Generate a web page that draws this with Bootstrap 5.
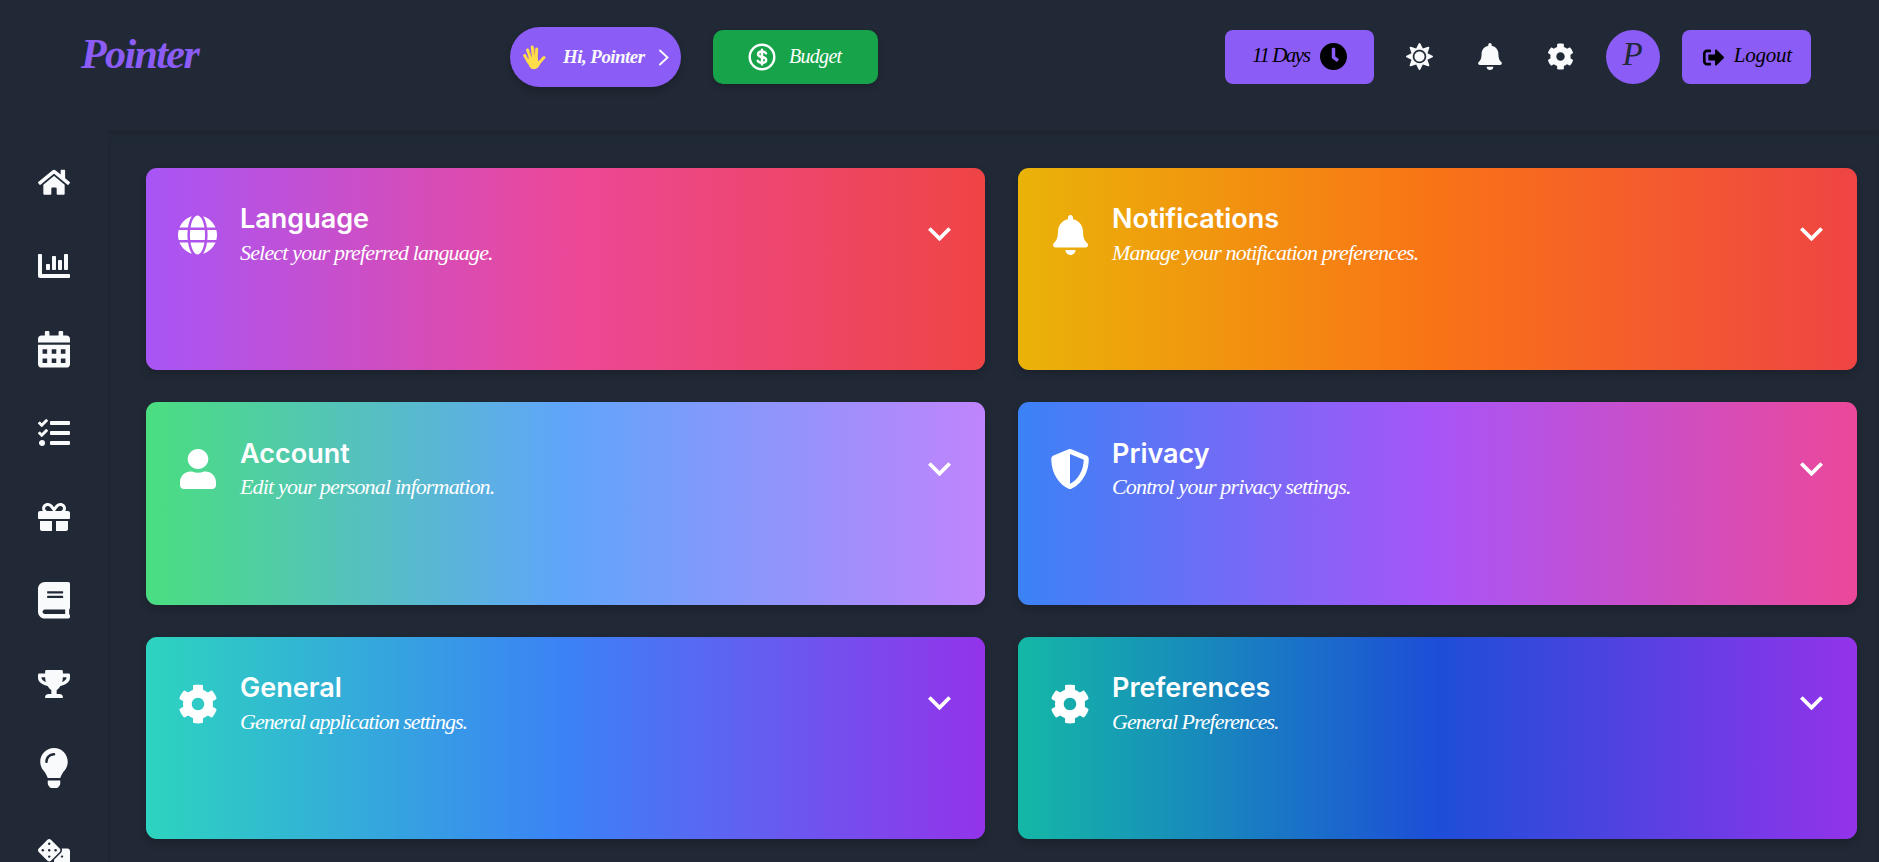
<!DOCTYPE html>
<html lang="en">
<head>
<meta charset="utf-8">
<meta name="viewport" content="width=device-width, initial-scale=1">
<title>Pointer - Settings</title>
<link href="https://cdn.jsdelivr.net/npm/bootstrap@5.3.0/dist/css/bootstrap.min.css" rel="stylesheet">
<style>
:root{--violet:#8b5cf6;--ink:#212936;--paper:#f9fafb}
body{background:var(--ink);font-family:Satisfy,"Liberation Serif",serif;font-style:italic;height:100vh;overflow:hidden;color:#fff}
svg{display:block;flex:none;fill:currentColor}
.topbar{height:130px;padding:0 68px 16px 81px}
.brand{color:var(--violet);font-size:42px;font-weight:700;line-height:1;width:429px;letter-spacing:-1.6px;padding-bottom:6px}
.hello{width:171px;height:60px;background:var(--violet);color:var(--paper);font-size:19px;font-weight:700;padding:0 11px 0 12px;box-shadow:0 4px 8px #0003}
.budget{width:165px;height:54px;margin-left:32px;background:#16a34a;border-radius:10px;font-size:20px;padding-left:35px;box-shadow:0 3px 6px #0003}
.solid{height:54px;background:var(--violet);color:#000;border-radius:8px;font-size:21px}
.days{width:149px;padding:0 27px}
.tools{color:var(--paper)}
.tools > svg,.days svg{margin-bottom:1px}
.tool-gap{margin-left:45px}
.edge-gap{margin-left:32px}
.avatar{width:54px;height:54px;background:var(--violet);color:var(--ink);font-size:33px;font-weight:500;padding:0 1px 5px 0}
.logout{width:129px;margin-left:22px;padding:0 19px 0 21px}
.txt{white-space:nowrap;line-height:1}
.t-hello{letter-spacing:-.55px;padding-left:1px;padding-bottom:2px}
.t-budget{letter-spacing:-.7px;margin-left:13px;padding-bottom:2px}
.t-days{letter-spacing:-1.5px;padding-bottom:3px}
.t-logout{letter-spacing:-.2px;padding-bottom:3px}
.rail{width:108px;color:var(--paper);padding-top:10.5px}
.rail a{height:83.65px;color:inherit}
.main-area{box-shadow:inset 0 11px 7px -6px #1d262f,inset 1px 0 2px -1px #1f2833;padding:37.9px 22px 0 38px}
.tiles{display:grid;grid-template-columns:1fr 1fr;gap:32px 33px;grid-auto-rows:202.5px}
.tile{border-radius:11px;padding:33.500px 34px 32px 32px;box-shadow:0 4px 8px #0003}
.tile-icon{width:40px;margin-right:22px}
.tile h2{font:600 27px/35.500px Inter,sans-serif;margin:0}
.tile p{font-size:22px;line-height:31px;margin:0;white-space:nowrap;letter-spacing:-.82px}
.g5 p,.g6 p{letter-spacing:-1px}
.g1{background:linear-gradient(90deg,#a855f7,#ec4899,#ef4444)}
.g2{background:linear-gradient(90deg,#eab308,#f97316,#ef4444)}
.g3{background:linear-gradient(90deg,#4ade80,#60a5fa,#c084fc)}
.g4{background:linear-gradient(90deg,#3b82f6,#a855f7,#ec4899)}
.g5{background:linear-gradient(90deg,#2dd4bf,#3b82f6,#9333ea)}
.g6{background:linear-gradient(90deg,#14b8a6,#1d4ed8,#9333ea)}
</style>
</head>
<body class="d-flex flex-column">
<svg width="0" height="0" class="position-absolute">
<symbol id="bell" viewBox="0 0 448 512"><path d="M224 512c35.32 0 63.97-28.65 63.97-64H160.03c0 35.35 28.65 64 63.97 64zm215.39-149.71c-19.32-20.76-55.47-51.99-55.47-154.29 0-77.7-54.48-139.9-127.94-155.16V32c0-17.67-14.32-32-31.98-32s-31.98 14.33-31.98 32v20.84C118.56 68.1 64.08 130.3 64.08 208c0 102.3-36.15 133.53-55.47 154.29-6 6.45-8.66 14.16-8.61 21.71.11 16.4 12.98 32 32.1 32h383.8c19.12 0 32-15.6 32.1-32 .05-7.55-2.61-15.27-8.61-21.71z"/></symbol>
<symbol id="cog" viewBox="0 0 512 512"><path d="M487.4 315.7l-42.6-24.6c4.3-23.2 4.3-47 0-70.2l42.6-24.6c4.9-2.8 7.1-8.6 5.5-14-11.1-35.6-30-67.8-54.7-94.6-3.8-4.1-10-5.1-14.8-2.3L380.8 110c-17.9-15.4-38.5-27.3-60.8-35.1V25.8c0-5.6-3.9-10.5-9.4-11.7-36.7-8.2-74.3-7.8-109.2 0-5.5 1.2-9.4 6.1-9.4 11.7V75c-22.2 7.9-42.8 19.8-60.8 35.1L88.7 85.5c-4.9-2.8-11-1.9-14.8 2.3-24.7 26.7-43.6 58.9-54.7 94.6-1.7 5.4.6 11.2 5.5 14L67.3 221c-4.3 23.2-4.3 47 0 70.2l-42.6 24.6c-4.9 2.8-7.1 8.6-5.5 14 11.1 35.6 30 67.8 54.7 94.6 3.8 4.1 10 5.1 14.8 2.3l42.6-24.6c17.9 15.4 38.5 27.3 60.8 35.1v49.2c0 5.6 3.9 10.5 9.4 11.7 36.7 8.2 74.3 7.8 109.2 0 5.5-1.2 9.4-6.1 9.4-11.7v-49.2c22.2-7.9 42.8-19.8 60.8-35.1l42.6 24.6c4.9 2.8 11 1.9 14.8-2.3 24.7-26.7 43.6-58.9 54.7-94.6 1.5-5.5-.7-11.3-5.6-14.1zM256 336c-44.1 0-80-35.9-80-80s35.9-80 80-80 80 35.9 80 80-35.9 80-80 80z"/></symbol>
<symbol id="down" viewBox="6 8.59 12 7.41"><path d="M16.59 8.59L12 13.17 7.41 8.59 6 10l6 6 6-6z"/></symbol>
</svg>

<header class="topbar d-flex align-items-center flex-shrink-0">
  <div class="brand txt">Pointer</div>
  <div class="hello rounded-pill d-flex align-items-center">
    <svg width="24" height="25" viewBox="0 0 24 25"><g fill="none" stroke="#ffdc4a" stroke-width="3" stroke-linecap="round"><path d="M2.7 10.5l4 7M5.6 5l3.5 10M10.2 2l1.5 12M14.7 4l-.6 11M22 12.5l-5.5 6"/></g><path fill="#ffdc4a" d="M5.2 15l2.6-3 7.8 0 .6 4.5 2.3-1.2-.4 4c-2 4.5-5.2 5.2-7.2 4.8-3-.2-4.8-4.5-5.7-9.1z"/><path fill="none" stroke="#f3aa20" stroke-width=".6" d="M7.3 6.5l1.600 4.500M12.200 3.500l.2 6.500M4.300 11.500l2 3"/></svg>
    <span class="txt ms-3 t-hello">Hi, Pointer</span>
    <svg class="ms-auto" width="12" height="17" viewBox="0 0 12 17"><path d="M2 1.5l7.5 7L2 15.500" fill="none" stroke="currentColor" stroke-width="1.9" stroke-linecap="round"/></svg>
  </div>
  <div class="budget d-flex align-items-center">
    <svg width="28" height="28" viewBox="0 0 28 28"><g fill="none" stroke="currentColor" stroke-width="2.4" stroke-linecap="round"><circle cx="14" cy="14" r="12.3"/><path d="M18 10.300q-1-1.800-4-1.800-4 0-4 2.700 0 2.200 4 2.800 4.200.6 4.200 3 0 2.700-4.200 2.700-3.300 0-4.300-2M14 6.800v14.600"/></g></svg>
    <span class="txt t-budget">Budget</span>
  </div>
  <div class="tools d-flex align-items-center ms-auto">
    <div class="solid days d-flex align-items-center justify-content-between"><span class="txt t-days">11 Days</span>
      <svg width="27" height="27" viewBox="8 8 496 496"><path d="M256,8C119,8,8,119,8,256S119,504,256,504,504,393,504,256,393,8,256,8Zm92.49,313h0l-20,25a16,16,0,0,1-22.49,2.5h0l-67-49.72a40,40,0,0,1-15-31.23V112a16,16,0,0,1,16-16h32a16,16,0,0,1,16,16V256l58,42.5A16,16,0,0,1,348.49,321Z"/></svg></div>
    <svg class="edge-gap" width="27" height="27" viewBox="0 0 512 512"><path d="M256 160c-52.9 0-96 43.1-96 96s43.1 96 96 96 96-43.1 96-96-43.1-96-96-96zm246.400 80.500l-94.700-47.300 33.500-100.400c4.500-13.600-8.400-26.500-21.900-21.900l-100.400 33.500-47.400-94.800c-6.400-12.800-24.600-12.800-31 0l-47.300 94.700L92.700 70.800c-13.600-4.500-26.500 8.400-21.900 21.900l33.500 100.400-94.700 47.400c-12.800 6.400-12.800 24.600 0 31l94.700 47.300-33.500 100.500c-4.500 13.600 8.400 26.500 21.900 21.900l100.400-33.500 47.300 94.700c6.400 12.800 24.600 12.800 31 0l47.300-94.700 100.400 33.500c13.600 4.500 26.500-8.400 21.900-21.900l-33.500-100.400 94.700-47.300c13-6.500 13-24.700.2-31.100zm-155.900 106c-49.900 49.900-131.100 49.900-181 0-49.900-49.900-49.900-131.100 0-181 49.900-49.900 131.100-49.900 181 0 49.900 49.900 49.900 131.100 0 181z"/></svg>
    <svg class="tool-gap" width="24" height="27"><use href="#bell"/></svg>
    <svg class="tool-gap" width="27" height="27"><use href="#cog"/></svg>
    <div class="avatar edge-gap rounded-circle d-flex align-items-center justify-content-center txt">P</div>
    <div class="solid logout d-flex align-items-center justify-content-between">
      <svg width="21" height="17" viewBox="0 52 504 408"><path d="M497 273L329 441c-15 15-41 4.500-41-17v-96H152c-13.300 0-24-10.700-24-24v-96c0-13.300 10.700-24 24-24h136V88c0-21.400 25.900-32 41-17l168 168c9.300 9.400 9.300 24.600 0 34zM192 436v-40c0-6.600-5.400-12-12-12H96c-17.700 0-32-14.300-32-32V160c0-17.700 14.300-32 32-32h84c6.600 0 12-5.400 12-12V76c0-6.600-5.400-12-12-12H96c-53 0-96 43-96 96v192c0 53 43 96 96 96h84c6.600 0 12-5.400 12-12z"/></svg>
      <span class="txt t-logout">Logout</span></div>
  </div>
</header>

<div class="d-flex flex-grow-1">
<nav class="rail flex-shrink-0 d-flex flex-column">
  <a class="d-flex align-items-center justify-content-center flex-shrink-0"><svg width="32" height="28.500" viewBox="0 0 576 512"><path d="M280.370 148.260L96 300.110V464a16 16 0 0 0 16 16l112.060-.29a16 16 0 0 0 15.920-16V368a16 16 0 0 1 16-16h64a16 16 0 0 1 16 16v95.640a16 16 0 0 0 16 16.050L464 480a16 16 0 0 0 16-16V300L295.670 148.260a12.190 12.190 0 0 0-15.300 0zM571.600 251.470L488 182.560V44.050a12 12 0 0 0-12-12h-56a12 12 0 0 0-12 12v72.610L318.470 43a48 48 0 0 0-61 0L4.340 251.470a12 12 0 0 0-1.600 16.900l25.500 31A12 12 0 0 0 45.150 301l235.220-193.740a12.190 12.190 0 0 1 15.300 0L530.900 301a12 12 0 0 0 16.900-1.600l25.500-31a12 12 0 0 0-1.700-16.930z"/></svg></a>
  <a class="d-flex align-items-center justify-content-center flex-shrink-0"><svg width="32" height="32" viewBox="0 0 512 512"><path d="M332.800 320h38.400c6.400 0 12.800-6.400 12.800-12.800V172.800c0-6.400-6.400-12.800-12.800-12.800h-38.400c-6.400 0-12.800 6.400-12.800 12.800v134.400c0 6.400 6.400 12.800 12.800 12.800zm96 0h38.400c6.400 0 12.800-6.400 12.800-12.800V76.800c0-6.400-6.400-12.800-12.800-12.800h-38.400c-6.400 0-12.800 6.400-12.800 12.800v230.400c0 6.400 6.400 12.800 12.800 12.800zm-288 0h38.400c6.400 0 12.800-6.400 12.800-12.800v-70.400c0-6.400-6.400-12.800-12.800-12.800h-38.400c-6.400 0-12.800 6.400-12.800 12.800v70.400c0 6.400 6.400 12.800 12.800 12.800zm96 0h38.400c6.400 0 12.800-6.400 12.800-12.800V108.800c0-6.400-6.400-12.800-12.800-12.800h-38.400c-6.400 0-12.800 6.400-12.800 12.800v198.400c0 6.400 6.400 12.800 12.800 12.800zM496 384H64V80c0-8.840-7.160-16-16-16H16C7.160 64 0 71.160 0 80v336c0 17.670 14.330 32 32 32h464c8.840 0 16-7.160 16-16v-32c0-8.840-7.160-16-16-16z"/></svg></a>
  <a class="d-flex align-items-center justify-content-center flex-shrink-0"><svg width="32" height="36.600" viewBox="0 0 448 512"><path fill-rule="evenodd" d="M0 464c0 26.500 21.500 48 48 48h352c26.500 0 48-21.500 48-48V192H0zM64 256h64v64H64zm128 0h64v64h-64zm128 0h64v64h-64zM64 384h64v64H64zm128 0h64v64h-64zm128 0h64v64h-64z"/><path d="M400 64h-48V16c0-8.800-7.200-16-16-16h-32c-8.800 0-16 7.200-16 16v48H160V16c0-8.800-7.200-16-16-16h-32c-8.800 0-16 7.200-16 16v48H48C21.500 64 0 85.500 0 112v48h448v-48c0-26.500-21.500-48-48-48z"/></svg></a>
  <a class="d-flex align-items-center justify-content-center flex-shrink-0"><svg width="32" height="32" viewBox="0 0 512 512"><path d="M139.610 35.500a12 12 0 0 0-17 0L58.930 98.810l-22.700-22.120a12 12 0 0 0-17 0L3.530 92.410a12 12 0 0 0 0 17l47.590 47.400a12.780 12.780 0 0 0 17.610 0l15.590-15.620L156.520 69a12.090 12.090 0 0 0 .09-17zm0 159.190a12 12 0 0 0-17 0l-63.680 63.720-22.700-22.100a12 12 0 0 0-17 0L3.530 252a12 12 0 0 0 0 17L51 316.500a12.770 12.770 0 0 0 17.600 0l15.700-15.690 72.200-72.220a12 12 0 0 0 .09-16.900zM64 368c-26.490 0-48.590 21.500-48.590 48S37.530 464 64 464a48 48 0 0 0 0-96zm432 16H208a16 16 0 0 0-16 16v32a16 16 0 0 0 16 16h288a16 16 0 0 0 16-16v-32a16 16 0 0 0-16-16zm0-320H208a16 16 0 0 0-16 16v32a16 16 0 0 0 16 16h288a16 16 0 0 0 16-16V80a16 16 0 0 0-16-16zm0 160H208a16 16 0 0 0-16 16v32a16 16 0 0 0 16 16h288a16 16 0 0 0 16-16v-32a16 16 0 0 0-16-16z"/></svg></a>
  <a class="d-flex align-items-center justify-content-center flex-shrink-0"><svg width="32" height="32" viewBox="0 0 512 512"><path d="M32 448c0 17.700 14.300 32 32 32h160V320H32v128zm256 32h160c17.700 0 32-14.300 32-32V320H288v160zm192-320h-42.100c6.200-12.100 10.100-25.500 10.100-40 0-48.500-39.500-88-88-88-41.600 0-68.500 21.300-103 68.300-34.500-47-61.400-68.300-103-68.300-48.500 0-88 39.500-88 88 0 14.500 3.800 27.900 10.100 40H32c-17.700 0-32 14.300-32 32v80c0 8.800 7.200 16 16 16h480c8.800 0 16-7.200 16-16v-80c0-17.700-14.300-32-32-32zm-326.100 0c-22.100 0-40-17.900-40-40s17.900-40 40-40c19.900 0 34.600 3.300 86.100 80h-86.100zm206.100 0h-86.100c51.400-76.500 65.700-80 86.100-80 22.100 0 40 17.900 40 40s-17.900 40-40 40z"/></svg></a>
  <a class="d-flex align-items-center justify-content-center flex-shrink-0"><svg width="32" height="36.600" viewBox="0 0 448 512"><path d="M448 360V24c0-13.300-10.700-24-24-24H96C43 0 0 43 0 96v320c0 53 43 96 96 96h328c13.300 0 24-10.700 24-24v-16c0-7.500-3.500-14.300-8.900-18.700-4.200-15.400-4.200-59.300 0-74.700 5.400-4.300 8.900-11.100 8.900-18.600zM128 134c0-3.300 2.700-6 6-6h212c3.300 0 6 2.700 6 6v20c0 3.300-2.700 6-6 6H134c-3.300 0-6-2.700-6-6v-20zm0 64c0-3.300 2.700-6 6-6h212c3.300 0 6 2.700 6 6v20c0 3.300-2.700 6-6 6H134c-3.300 0-6-2.700-6-6v-20zm253.400 250H96c-17.700 0-32-14.300-32-32 0-17.600 14.400-32 32-32h285.400c-1.900 17.100-1.900 46.900 0 64z"/></svg></a>
  <a class="d-flex align-items-center justify-content-center flex-shrink-0"><svg width="32" height="28.500" viewBox="0 0 576 512"><path d="M552 64H448V24c0-13.300-10.700-24-24-24H152c-13.300 0-24 10.700-24 24v40H24C10.700 64 0 74.700 0 88v56c0 35.700 22.500 72.400 61.900 100.700 31.500 22.700 69.800 37.100 110 41.700C203.300 338.500 240 360 240 360v72h-48c-35.300 0-64 20.700-64 56v12c0 6.600 5.400 12 12 12h296c6.600 0 12-5.400 12-12v-12c0-35.300-28.700-56-64-56h-48v-72s36.700-21.500 68.100-73.600c40.300-4.600 78.600-19 110-41.700 39.300-28.300 61.900-65 61.900-100.700V88c0-13.300-10.700-24-24-24zM99.300 192.800C74.900 175.200 64 155.600 64 144v-16h64.200c1 32.600 5.800 61.200 12.800 86.200-15.100-5.200-29.200-12.400-41.700-21.400zM512 144c0 16.100-17.700 36.100-35.300 48.800-12.500 9-26.700 16.200-41.800 21.400 7-25 11.800-53.600 12.800-86.200H512v16z"/></svg></a>
  <a class="d-flex align-items-center justify-content-center flex-shrink-0"><svg width="28" height="40" viewBox="0 0 352 512"><path d="M96.060 454.350c.01 6.290 1.870 12.450 5.360 17.690l17.090 25.690a31.990 31.990 0 0 0 26.640 14.280h61.710a31.990 31.990 0 0 0 26.640-14.280l17.090-25.690a31.989 31.989 0 0 0 5.360-17.690l.04-38.350H96.010l.05 38.350zM0 176c0 44.370 16.450 84.850 43.560 115.780 16.520 18.850 42.360 58.230 52.210 91.450.04.26.07.52.11.78h160.240c.04-.26.07-.51.11-.78 9.850-33.220 35.690-72.600 52.210-91.450C335.550 260.850 352 220.370 352 176 352 78.610 272.910-.3 175.450 0 73.440.31 0 82.970 0 176zm176-80c-44.110 0-80 35.890-80 80 0 8.840-7.160 16-16 16s-16-7.160-16-16c0-61.760 50.240-112 112-112 8.840 0 16 7.160 16 16s-7.160 16-16 16z"/></svg></a>
  <a class="d-flex align-items-center justify-content-center flex-shrink-0"><svg width="32" height="25.600" viewBox="0 0 640 512"><path d="M592 192H473.260c12.690 29.590 7.120 65.200-17 89.320L320 417.580V464c0 26.510 21.490 48 48 48h224c26.510 0 48-21.490 48-48V240c0-26.510-21.490-48-48-48zM480 376c-13.250 0-24-10.750-24-24 0-13.260 10.750-24 24-24s24 10.740 24 24c0 13.250-10.750 24-24 24z"/><path d="M433.630 189.300L258.700 14.370c-19.160-19.160-50.230-19.160-69.390 0L14.370 189.300c-19.160 19.160-19.160 50.230 0 69.390L189.300 433.630c19.160 19.160 50.230 19.160 69.390 0L433.630 258.700c19.160-19.170 19.160-50.240 0-69.400z"/><g fill="#212936"><circle cx="96" cy="224" r="24"/><circle cx="224" cy="96" r="24"/><circle cx="224" cy="224" r="24"/><circle cx="224" cy="352" r="24"/><circle cx="352" cy="224" r="24"/></g></svg></a>
</nav>

<main class="main-area flex-grow-1">
<div class="tiles">
  <section class="tile g1"><div class="d-flex align-items-center"><div class="tile-icon"><svg width="39" height="40" viewBox="0 8 496 496"><path d="M336.500 160C322 70.700 287.800 8 248 8s-74 62.700-88.500 152h177zM152 256c0 22.200 1.200 43.500 3.300 64h185.300c2.100-20.500 3.300-41.800 3.300-64s-1.200-43.500-3.300-64H155.300c-2.100 20.500-3.300 41.800-3.300 64zm324.700-96c-28.600-67.900-86.500-120.400-158-141.600 24.400 33.800 41.200 84.700 50 141.600h108zM177.200 18.400C105.800 39.600 47.800 92.100 19.300 160h108c8.700-56.900 25.500-107.800 49.900-141.600zM487.400 192H372.700c2.100 21 3.300 42.500 3.300 64s-1.200 43-3.300 64h114.600c5.500-20.500 8.600-41.800 8.600-64s-3.100-43.500-8.500-64zM120 256c0-21.500 1.200-43 3.300-64H8.600C3.200 212.500 0 233.800 0 256s3.200 43.500 8.600 64h114.600c-2-21-3.200-42.500-3.200-64zm39.500 96c14.500 89.300 48.700 152 88.500 152s74-62.700 88.500-152h-177zm159.300 141.600c71.400-21.200 129.400-73.700 158-141.600h-108c-8.800 56.900-25.600 107.800-50 141.600zM19.300 352c28.600 67.900 86.500 120.400 158 141.600-24.400-33.800-41.200-84.700-50-141.600h-108z"/></svg></div><div><h2>Language</h2><p>Select your preferred language.</p></div><svg class="ms-auto" width="23" height="14.500"><use href="#down"/></svg></div></section>
  <section class="tile g2"><div class="d-flex align-items-center"><div class="tile-icon"><svg class="mx-auto" width="35" height="40"><use href="#bell"/></svg></div><div><h2>Notifications</h2><p>Manage your notification preferences.</p></div><svg class="ms-auto" width="23" height="14.500"><use href="#down"/></svg></div></section>
  <section class="tile g3"><div class="d-flex align-items-center"><div class="tile-icon"><svg class="mx-auto" width="36" height="40" viewBox="0 0 448 512" preserveAspectRatio="none"><path d="M224 256c70.700 0 128-57.300 128-128S294.700 0 224 0 96 57.300 96 128s57.300 128 128 128zm89.600 32h-16.700c-22.200 10.200-46.900 16-72.900 16s-50.600-5.800-72.900-16h-16.700C60.200 288 0 348.200 0 422.400V464c0 26.500 21.500 48 48 48h352c26.500 0 48-21.500 48-48v-41.600c0-74.200-60.200-134.400-134.400-134.400z"/></svg></div><div><h2>Account</h2><p>Edit your personal information.</p></div><svg class="ms-auto" width="23" height="14.500"><use href="#down"/></svg></div></section>
  <section class="tile g4"><div class="d-flex align-items-center"><div class="tile-icon"><svg width="40" height="40" viewBox="0 0 512 512"><path d="M466.500 83.700l-192-80a48.150 48.150 0 0 0-36.900 0l-192 80C27.700 91.100 16 108.600 16 128c0 198.500 114.500 335.700 221.500 380.300 11.800 4.900 25.100 4.900 36.900 0C360.100 472.600 496 349.300 496 128c0-19.400-11.700-36.900-29.500-44.300zM256.100 446.300l-.1-381 175.900 73.300c-3.300 151.400-82.100 261.100-175.800 307.700z"/></svg></div><div><h2>Privacy</h2><p>Control your privacy settings.</p></div><svg class="ms-auto" width="23" height="14.500"><use href="#down"/></svg></div></section>
  <section class="tile g5"><div class="d-flex align-items-center"><div class="tile-icon"><svg width="40" height="40"><use href="#cog"/></svg></div><div><h2>General</h2><p>General application settings.</p></div><svg class="ms-auto" width="23" height="14.500"><use href="#down"/></svg></div></section>
  <section class="tile g6"><div class="d-flex align-items-center"><div class="tile-icon"><svg width="40" height="40"><use href="#cog"/></svg></div><div><h2>Preferences</h2><p>General Preferences.</p></div><svg class="ms-auto" width="23" height="14.500"><use href="#down"/></svg></div></section>
</div>
</main>
</div>
<script src="https://cdn.jsdelivr.net/npm/bootstrap@5.3.0/dist/js/bootstrap.bundle.min.js"></script>
</body>
</html>
